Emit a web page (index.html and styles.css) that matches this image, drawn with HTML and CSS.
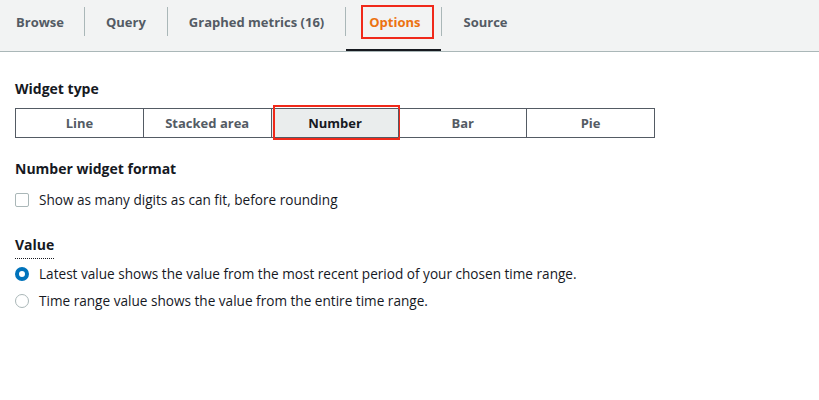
FILE: index.html
```html
<!DOCTYPE html>
<html>
<head>
<meta charset="utf-8">
<link rel="stylesheet" href="styles.css">
</head>
<body>
<div class="tabbar">
  <div class="tab first"><span class="label">Browse</span></div>
  <span class="sep"></span>
  <div class="tab"><span class="label">Query</span></div>
  <span class="sep"></span>
  <div class="tab"><span class="label">Graphed metrics (16)</span></div>
  <span class="sep"></span>
  <div class="tab active"><span class="label">Options</span></div>
  <span class="sep"></span>
  <div class="tab"><span class="label">Source</span></div>
</div>
<div class="content">
  <div class="section s1">
    <div class="heading">Widget type</div>
    <div class="segmented">
      <div class="seg">Line</div>
      <div class="seg">Stacked area</div>
      <div class="seg selected">Number</div>
      <div class="seg">Bar</div>
      <div class="seg">Pie</div>
    </div>
  </div>
  <div class="section s2">
    <div class="heading">Number widget format</div>
    <label class="option"><span class="checkbox"></span>Show as many digits as can fit, before rounding</label>
  </div>
  <div class="section s3">
    <div class="heading"><span class="dotted">Value</span></div>
    <label class="option"><span class="radio checked"></span>Latest value shows the value from the most recent period of your chosen time range.</label>
    <label class="option"><span class="radio"></span>Time range value shows the value from the entire time range.</label>
  </div>
</div>
</body>
</html>
```

FILE: styles.css
```css
html, body {
  margin: 0;
  padding: 0;
  background: #ffffff;
  font-family: "Open Sans", "Liberation Sans", Arial, sans-serif;
  font-size: 13px;
  color: #16191f;
}

.tabbar {
  display: flex;
  align-items: stretch;
  height: 51px;
  padding-left: 16px;
  background: #f2f3f3;
  border-bottom: 1px solid #aab7b8;
}

.tab {
  display: flex;
  align-items: flex-start;
  padding: 0 14px;
  font-weight: bold;
  color: #545b64;
  line-height: 18px;
}

.tab .label {
  display: block;
  margin-top: 13px;
  padding: 0 7px;
}

.tab.first {
  padding-left: 0;
  padding-right: 13px;
}

.tab.first .label {
  padding-left: 0;
}

.tab.active {
  box-shadow: inset 0 -2px 0 #16191f;
}

.tab.active .label {
  color: #ec7211;
  outline: 2px solid #f0291a;
  outline-offset: 0;
  padding: 6px 12px 6px 6px;
  margin-top: 7px;
  margin-left: 3px;
  margin-right: -5px;
}

.sep {
  width: 1px;
  height: 29px;
  margin-top: 7px;
  background: #aab7b8;
}

.content {
  padding: 0 15px;
}

.section {
  display: flex;
  flex-direction: column;
  align-items: flex-start;
}

.heading {
  font-weight: bold;
  font-size: 14px;
  line-height: 20px;
  margin-bottom: 7px;
}

.s1 .heading {
  margin-top: 27px;
  margin-bottom: 9px;
}

.s2 .heading {
  margin-top: 21px;
}

.s3 .heading {
  margin-top: 22px;
  margin-bottom: 1px;
}

.dotted {
  display: inline-block;
  border-bottom: 1px dotted #16191f;
  padding-bottom: 3px;
  line-height: 20px;
}

.segmented {
  display: flex;
  width: 638px;
  border: 1px solid #545b64;
}

.seg {
  width: 127px;
  height: 28px;
  display: flex;
  align-items: center;
  justify-content: center;
  font-weight: bold;
  color: #545b64;
  border-left: 1px solid #545b64;
  position: relative;
}

.seg:first-child {
  border-left: none;
}

.seg.selected {
  background: #eaeded;
  color: #16191f;
}

.seg.selected::after {
  content: "";
  position: absolute;
  left: 1px;
  right: -2px;
  top: -4px;
  bottom: -3px;
  border: 2px solid #f0291a;
}

.option {
  display: flex;
  align-items: center;
  font-size: 13.6px;
  line-height: 20px;
  height: 27px;
  color: #16191f;
}

.checkbox {
  width: 12px;
  height: 12px;
  border: 1px solid #aab7b8;
  border-radius: 2px;
  margin: 0 10px 0 0;
  flex: none;
}

.radio {
  width: 12px;
  height: 12px;
  border: 1px solid #aab7b8;
  border-radius: 50%;
  margin: 0 10px 0 0;
  flex: none;
}

.radio.checked {
  width: 6px;
  height: 6px;
  border: 4px solid #0073bb;
}
```
